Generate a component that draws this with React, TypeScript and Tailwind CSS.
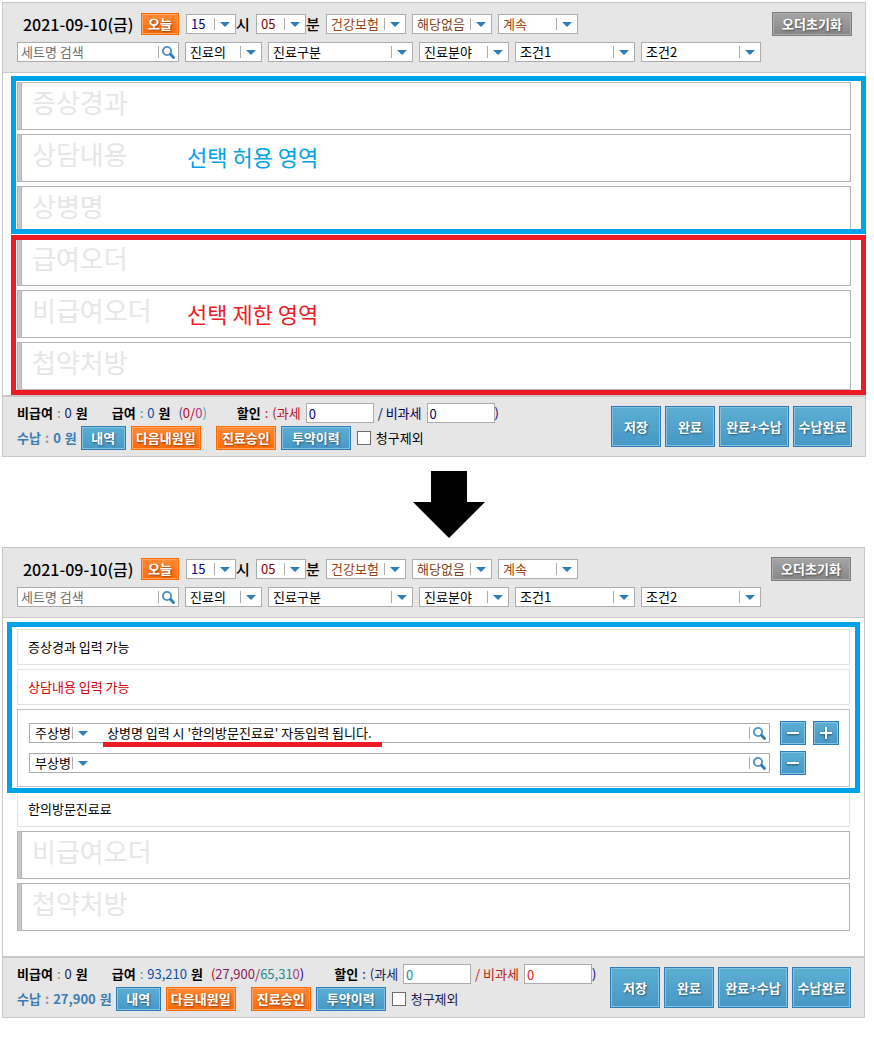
import type { ReactNode } from 'react'

type Tone = 'blue' | 'orange' | 'gray'

const tones: Record<Tone, string> = {
  blue: 'border-[#2f7db8] from-[#5cafd3] to-[#4797c6] shadow-[inset_0_0_0_1px_#84c0df]',
  orange: 'border-[#ff6a00] from-[#ff8a35] to-[#ff6a00] shadow-[inset_0_0_0_1px_#ffa566]',
  gray: 'border-[#7c7c7c] from-[#a6a6a6] to-[#868686] shadow-[inset_0_0_0_1px_#acacac]',
}

const Button = ({ tone = 'blue', className, label, children }: { tone?: Tone; className: string; label?: string; children: ReactNode }) => (
  <button
    type="button"
    aria-label={label}
    className={`flex shrink-0 items-center justify-center whitespace-nowrap border bg-linear-to-b leading-4 font-bold text-white [text-shadow:1px_1px_2px_rgba(0,0,0,0.45)] ${tones[tone]} ${className}`}
  >
    {children}
  </button>
)

const Caret = () => (
  <svg viewBox="0 0 10 5" className="h-[5px] w-[10px]" fill="#2f7db8" aria-hidden="true">
    <path d="M0 0h10L5 5z" />
  </svg>
)

const Select = ({ label, value, className, color = 'text-black' }: { label: string; value: string; className: string; color?: string }) => (
  <div className={`relative h-5 shrink-0 ${className}`}>
    <select aria-label={label} className={`h-full w-full appearance-none border border-[#acacac] bg-white pl-1 leading-4 ${color}`}>
      <option>{value}</option>
    </select>
    <span className="pointer-events-none absolute inset-y-0 right-1.5 flex items-center gap-[5px]">
      <span className="h-3 w-px bg-[#acacac]" />
      <Caret />
    </span>
  </div>
)

const SearchButton = ({ label }: { label: string }) => (
  <span className="flex shrink-0 items-center gap-[3px] pr-[3px]">
    <span className="h-3 w-px bg-[#acacac]" />
    <button type="button" aria-label={label}>
      <svg viewBox="0 0 13 13" className="block size-[13px]" fill="none" aria-hidden="true">
        <circle cx="5" cy="5" r="4.1" stroke="#4a90c4" strokeWidth="1.8" />
        <path d="M8.5 8.3l3 3.2" stroke="#2f7db8" strokeWidth="2.9" strokeLinecap="round" />
      </svg>
    </button>
  </span>
)

const Header = () => (
  <header className="flex flex-col gap-1.5 border-b border-[#c8c8c8] bg-[#e6e6e6] pt-[9px] pr-[13px] pb-2.5 pl-3.5">
    <div className="flex h-6 items-center">
      <span className="w-[124px] shrink-0 whitespace-nowrap pl-1.5 text-base leading-6 font-medium">2021-09-10(금)</span>
      <Button tone="orange" className="h-[22px] w-[38px]">오늘</Button>
      <Select label="시" value="15" className="ml-[7px] w-[50px]" color="text-[#000080]" />
      <span className="w-5 shrink-0 text-[15px] font-medium">시</span>
      <Select label="분" value="05" className="w-[50px]" color="text-[#800000]" />
      <span className="w-5 shrink-0 text-[15px] font-medium">분</span>
      <div className="flex gap-1.5">
        <Select label="보험 구분" value="건강보험" className="w-20" color="text-[#9a4310]" />
        <Select label="해당 여부" value="해당없음" className="w-20" color="text-[#7a4420]" />
        <Select label="진행 상태" value="계속" className="w-20" color="text-[#9a4310]" />
      </div>
      <Button tone="gray" className="ml-auto h-6 w-20">오더초기화</Button>
    </div>
    <div className="flex h-5 items-center gap-1.5">
      <div className="flex h-5 w-[162px] shrink-0 items-center border border-[#acacac] bg-white">
        <input aria-label="세트명 검색" placeholder="세트명 검색" className="min-w-0 flex-1 pl-[3px] leading-4 outline-none placeholder:text-[#6d6d6d]" />
        <SearchButton label="검색" />
      </div>
      <Select label="진료의" value="진료의" className="w-[77px]" />
      <Select label="진료구분" value="진료구분" className="w-[145px]" />
      <Select label="진료분야" value="진료분야" className="w-[90px]" />
      <Select label="조건1" value="조건1" className="w-[120px]" />
      <Select label="조건2" value="조건2" className="w-[120px]" />
    </div>
  </header>
)

const Section = ({ title }: { title: string }) => (
  <button type="button" className="flex h-12 w-full border border-[#b4b4b4] bg-white text-left">
    <span className="h-full w-1 border-r border-[#b4b4b4] bg-[#c8c8c8]" />
    <span className="pl-2.5 text-[26px] leading-[38px] text-[#e6e6e6]">{title}</span>
  </button>
)

const Note = ({ color = 'text-black', children }: { color?: string; children: ReactNode }) => (
  <p className={`border border-[#e2e2e2] px-2.5 py-[7px] ${color}`}>{children}</p>
)

const DiseaseRow = ({ kind, value, last }: { kind: string; value?: string; last?: boolean }) => (
  <div className="flex h-6 items-center">
    <div className="relative flex h-5 flex-1 items-center border border-[#acacac] bg-white">
      <select aria-label="상병 구분" className="w-[42px] appearance-none pl-[5px] leading-4">
        <option>{kind}</option>
      </select>
      <span className="pointer-events-none flex items-center gap-[5px]">
        <span className="h-3 w-px bg-[#acacac]" />
        <Caret />
      </span>
      <input aria-label={`${kind}명`} defaultValue={value} className="ml-[19px] min-w-0 flex-1 leading-4 outline-none" />
      <SearchButton label={`${kind} 검색`} />
      {value && <span className="absolute top-[18px] left-[73px] h-[5px] w-[279px] bg-[#ed1c24]" />}
    </div>
    <Button label="삭제" className="ml-2.5 h-6 w-[26px]">
      <svg viewBox="0 0 12 12" className="size-3 drop-shadow-[0_1px_1px_rgba(0,0,0,0.5)]" stroke="#fff" strokeWidth="2"><path d="M0 6h12" /></svg>
    </Button>
    {last ? (
      <span className="ml-[7px] w-[26px]" />
    ) : (
      <Button label="추가" className="ml-[7px] h-6 w-[26px]">
        <svg viewBox="0 0 12 12" className="size-3 drop-shadow-[0_1px_1px_rgba(0,0,0,0.5)]" stroke="#fff" strokeWidth="2"><path d="M0 6h12M6 0v12" /></svg>
      </Button>
    )}
  </div>
)

type FooterProps = {
  covered: string
  copay: ReactNode
  paid: string
  taxColor: string
  freeColor: string
  inputColors: [string, string]
  excludeColor: string
}

const Footer = ({ covered, copay, paid, taxColor, freeColor, inputColors, excludeColor }: FooterProps) => (
  <footer className="flex items-center justify-between border-t-2 border-[#c8c8c8] bg-[#e6e6e6] py-1.5 pr-[13px] pl-3.5">
    <div className="flex flex-col gap-[3px] whitespace-nowrap">
      <div className="flex h-5 items-center">
        <span className="flex gap-1"><b>비급여</b><span className="text-[#80803a]">:</span><span className="text-[#1b1b5e]">0</span><b>원</b></span>
        <span className="ml-6 flex gap-1"><b>급여</b><span className="text-[#2a9ab0]">:</span><span className="text-[#0a4fa8]">{covered}</span><b>원</b></span>
        <span className="ml-2">{copay}</span>
        <span className="ml-[30px] flex gap-1"><b>할인</b><span className={taxColor}>:</span><span className={taxColor}>(과세</span></span>
        <input aria-label="과세" defaultValue="0" className={`ml-[5px] h-5 w-[68px] border border-[#acacac] bg-white px-0.5 leading-4 ${inputColors[0]}`} />
        <span className={`ml-1 ${freeColor}`}>/ 비과세</span>
        <input aria-label="비과세" defaultValue="0" className={`ml-[5px] h-5 w-[68px] border border-[#acacac] bg-white px-0.5 leading-4 ${inputColors[1]}`} />
        <span className="text-[#000080]">)</span>
      </div>
      <div className="flex h-6 items-center gap-1">
        <span className="flex gap-1 font-bold text-[#3a7cb4]"><span>수납</span><span className="text-[#b58a9c]">:</span><span>{paid}</span><span>원</span></span>
        <Button className="h-6 w-[45px]">내역</Button>
        <Button tone="orange" className="ml-px h-6 w-[70px]">다음내원일</Button>
        <Button tone="orange" className="ml-[11px] h-6 w-[60px]">진료승인</Button>
        <Button className="ml-px h-6 w-[70px]">투약이력</Button>
        <label className={`ml-0.5 flex items-center gap-[5px] ${excludeColor}`}>
          <input type="checkbox" className="size-3.5 appearance-none border border-[#6d6d6d] bg-white checked:bg-[#2f7db8]" />
          청구제외
        </label>
      </div>
    </div>
    <div className="flex gap-1">
      <Button className="h-[41px] w-[50px]">저장</Button>
      <Button className="h-[41px] w-[50px]">완료</Button>
      <Button className="h-[41px] w-[70px]">완료+수납</Button>
      <Button className="h-[41px] w-[59px]">수납완료</Button>
    </div>
  </footer>
)

export default function App() {
  return (
    <main className="min-h-screen bg-white pt-0.5 pb-6 pl-0.5 font-['Noto_Sans_CJK_KR',sans-serif] text-[13px] leading-5 text-black">
      <section className="mr-2 border border-[#c8c8c8]">
        <Header />
        <div className="flex flex-col gap-1 px-3.5 pt-[9px] pb-[5px]">
          <div className="relative flex flex-col gap-1">
            <Section title="증상경과" />
            <Section title="상담내용" />
            <Section title="상병명" />
            <div className="pointer-events-none absolute -top-1.5 -right-[15px] bottom-0 -left-1.5 flex items-center border-5 border-[#00a2e8] pt-0.5 pl-[171px] text-[22px] leading-8 text-[#00a2e8]">
              선택 허용 영역
            </div>
          </div>
          <div className="relative flex flex-col gap-1">
            <Section title="급여오더" />
            <Section title="비급여오더" />
            <Section title="첩약처방" />
            <div className="pointer-events-none absolute -top-[3px] -right-[15px] -bottom-[5px] -left-1.5 flex items-center border-5 border-[#ed1c24] pb-1 pl-[171px] text-[22px] leading-8 text-[#ed1c24]">
              선택 제한 영역
            </div>
          </div>
        </div>
        <Footer
          covered="0"
          copay={<><span className="text-[#5a3aa0]">(</span><span className="text-[#c00020]">0/</span><span className="text-[#b03a80]">0</span><span className="text-[#2aa8b8]">)</span></>}
          paid="0"
          taxColor="text-[#b8121c]"
          freeColor="text-[#000060]"
          inputColors={['text-[#000080]', 'text-[#000060]']}
          excludeColor="text-black"
        />
      </section>

      <div className="flex justify-center pt-3.5 pb-[9px] pl-[22px]">
        <svg viewBox="0 0 72 67" className="h-[67px] w-[72px]" aria-hidden="true">
          <path d="M18 0h36v31h18L36 67 0 31h18z" />
        </svg>
      </div>

      <section className="mr-[9px] border border-[#c8c8c8]">
        <Header />
        <div className="flex flex-col gap-1 px-3.5 pt-[11px] pb-[25px]">
          <div className="relative flex flex-col gap-1">
            <Note>증상경과 입력 가능</Note>
            <Note color="text-[#cc0000]">상담내용 입력 가능</Note>
            <div className="flex flex-col gap-1.5 border border-[#c4c4c4] py-[11px] pr-2.5 pl-[11px]">
              <DiseaseRow kind="주상병" value="상병명 입력 시 '한의방문진료료' 자동입력 됩니다." />
              <DiseaseRow kind="부상병" last />
            </div>
            <div className="pointer-events-none absolute -top-[7px] -right-2.5 -bottom-1.5 -left-2.5 border-5 border-[#00a2e8]" />
          </div>
          <Note>한의방문진료료</Note>
          <Section title="비급여오더" />
          <Section title="첩약처방" />
        </div>
        <Footer
          covered="93,210"
          copay={<><span className="text-[#c00020]">(</span><span className="text-[#8c1a5c]">27,900/</span><span className="text-[#1f8a94]">65,31</span><span className="text-[#b03a80]">0</span><span className="text-[#000080]">)</span></>}
          paid="27,900"
          taxColor="text-[#1b1b5e]"
          freeColor="text-[#b8220f]"
          inputColors={['text-[#0f8f98]', 'text-[#e02010]']}
          excludeColor="text-[#1b1b4e]"
        />
      </section>
    </main>
  )
}
